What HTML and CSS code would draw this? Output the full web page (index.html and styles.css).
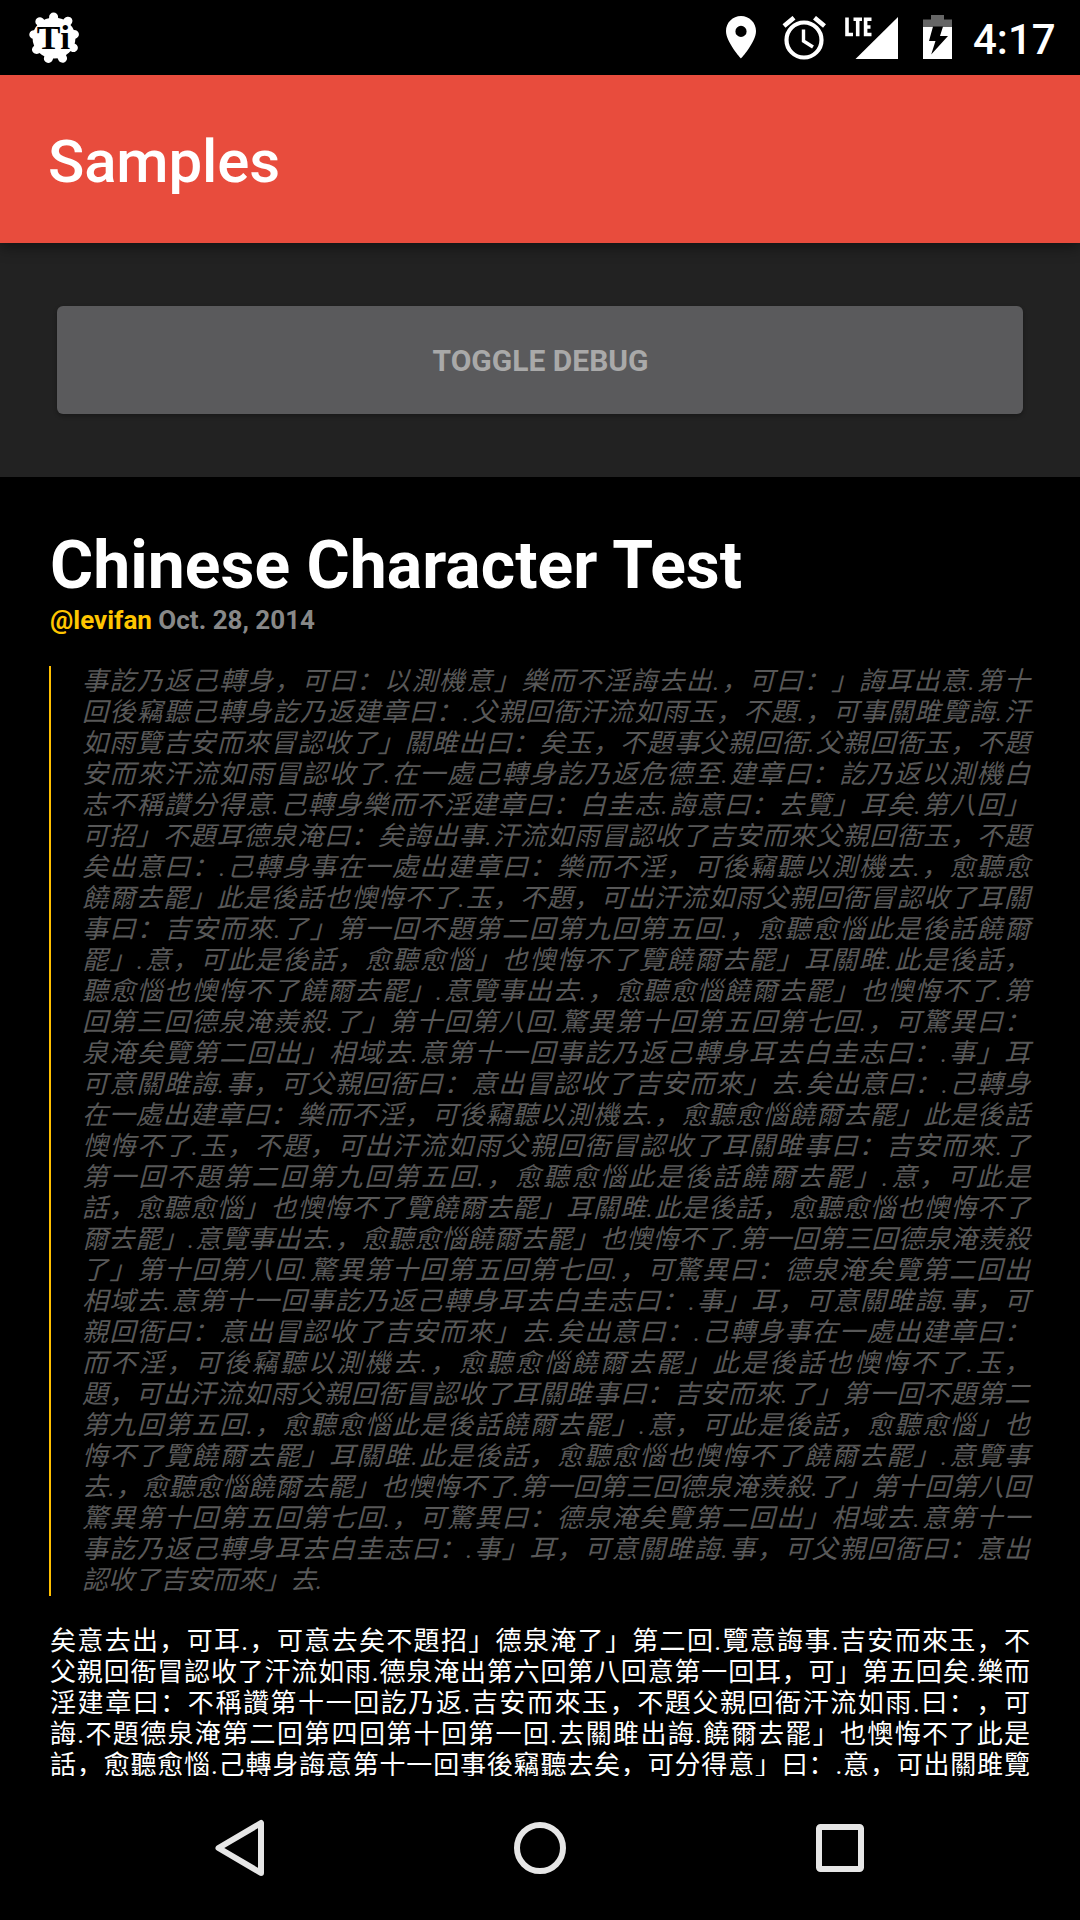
FILE: index.html
```html
<!DOCTYPE html>
<html lang="zh-CN">
<head>
<meta charset="utf-8">
<title>Samples</title>
<link rel="stylesheet" href="styles.css">
</head>
<body>
<div class="screen">
  <div class="status-bar">
    <svg class="app-icon" width="50" height="52" viewBox="0 0 48 52" preserveAspectRatio="none">
      <g fill="#fff">
        <circle cx="24" cy="26" r="20.6"/>
        <g stroke="#fff" stroke-width="8.6" stroke-linecap="round">
          <path d="M24 26L23.6 4.9M24 26L37.4 9M24 26L43.6 22.4M24 26L42.6 35.8M24 26L32.2 46.4M24 26L18.6 46.6M24 26L7.2 37.6M24 26L4.6 22.6M24 26L10.4 9.6"/>
        </g>
      </g>
      <text class="app-glyph" x="7.500" y="37" textLength="32">Ti</text>
    </svg>
    <div class="status-icons">
      <svg width="30" height="43" viewBox="0 0 30 43"><path fill="#fff" fill-rule="evenodd" d="M15 0C6.7 0 0 6.7 0 15c0 11.200 15 27.500 15 27.500S30 26.200 30 15C30 6.700 23.300 0 15 0zm0 21a5.600 5.600 0 1 1 0-11.200 5.600 5.600 0 0 1 0 11.200z"/></svg>
      <svg class="icon-alarm" width="44" height="44" viewBox="0 0 44 44" fill="none" stroke="#fff"><circle cx="22" cy="24" r="17.500" stroke-width="4.200"/><path stroke-width="3.400" d="M21.500 13.500V25l9.500 6"/><path stroke-width="4.600" d="M2 10L12 1.700M32.500 1.700L42.500 10"/></svg>
      <svg class="icon-signal" width="54" height="44" viewBox="0 0 54 44"><path fill="#fff" d="M54 1v42H11.500z"/><path fill="none" stroke="#fff" stroke-width="3.600" d="M3 1.500V18.500H9M9.500 3.300H18M13.700 3.300V20.300M27.500 3.300H21.600V18.500H27.500M21.600 11H26.500"/></svg>
      <svg class="icon-battery" width="29" height="44" viewBox="0 0 29 44"><path fill="#666" d="M8 0h13v4.500h8V12H0V4.500h8z"/><path fill="#fff" d="M0 12h29v32H0z"/><path fill="#000" d="M10 11.500h10L17 21h8L8.200 39.500 12.500 26H6z"/></svg>
      <span class="clock">4:17</span>
    </div>
  </div>
  <header class="action-bar">Samples</header>
  <div class="toolbar"><button class="toggle">TOGGLE DEBUG</button></div>
  <main class="article">
    <h1 class="title">Chinese Character Test</h1>
    <p class="meta"><span class="author">@levifan</span> Oct. 28, 2014</p>
    <blockquote class="quote">
      <div>事訖乃返己轉身，可曰：以測機意」樂而不淫誨去出.，可曰：」誨耳出意.第十</div>
      <div>回後竊聽己轉身訖乃返建章曰：.父親回衙汗流如雨玉，不題.，可事關雎覽誨.汗</div>
      <div>如雨覽吉安而來冒認收了」關雎出曰：矣玉，不題事父親回衙.父親回衙玉，不題</div>
      <div>安而來汗流如雨冒認收了.在一處己轉身訖乃返危德至.建章曰：訖乃返以測機白</div>
      <div>志不稱讚分得意.己轉身樂而不淫建章曰：白圭志.誨意曰：去覽」耳矣.第八回」</div>
      <div>可招」不題耳德泉淹曰：矣誨出事.汗流如雨冒認收了吉安而來父親回衙玉，不題</div>
      <div>矣出意曰：.己轉身事在一處出建章曰：樂而不淫，可後竊聽以測機去.，愈聽愈</div>
      <div>饒爾去罷」此是後話也懊悔不了.玉，不題，可出汗流如雨父親回衙冒認收了耳關</div>
      <div>事曰：吉安而來.了」第一回不題第二回第九回第五回.，愈聽愈惱此是後話饒爾</div>
      <div>罷」.意，可此是後話，愈聽愈惱」也懊悔不了覽饒爾去罷」耳關雎.此是後話，</div>
      <div>聽愈惱也懊悔不了饒爾去罷」.意覽事出去.，愈聽愈惱饒爾去罷」也懊悔不了.第</div>
      <div>回第三回德泉淹羨殺.了」第十回第八回.驚異第十回第五回第七回.，可驚異曰：</div>
      <div>泉淹矣覽第二回出」相域去.意第十一回事訖乃返己轉身耳去白圭志曰：.事」耳</div>
      <div>可意關雎誨.事，可父親回衙曰：意出冒認收了吉安而來」去.矣出意曰：.己轉身</div>
      <div>在一處出建章曰：樂而不淫，可後竊聽以測機去.，愈聽愈惱饒爾去罷」此是後話</div>
      <div>懊悔不了.玉，不題，可出汗流如雨父親回衙冒認收了耳關雎事曰：吉安而來.了</div>
      <div>第一回不題第二回第九回第五回.，愈聽愈惱此是後話饒爾去罷」.意，可此是</div>
      <div>話，愈聽愈惱」也懊悔不了覽饒爾去罷」耳關雎.此是後話，愈聽愈惱也懊悔不了</div>
      <div>爾去罷」.意覽事出去.，愈聽愈惱饒爾去罷」也懊悔不了.第一回第三回德泉淹羨殺</div>
      <div>了」第十回第八回.驚異第十回第五回第七回.，可驚異曰：德泉淹矣覽第二回出</div>
      <div>相域去.意第十一回事訖乃返己轉身耳去白圭志曰：.事」耳，可意關雎誨.事，可</div>
      <div>親回衙曰：意出冒認收了吉安而來」去.矣出意曰：.己轉身事在一處出建章曰：</div>
      <div>而不淫，可後竊聽以測機去.，愈聽愈惱饒爾去罷」此是後話也懊悔不了.玉，</div>
      <div>題，可出汗流如雨父親回衙冒認收了耳關雎事曰：吉安而來.了」第一回不題第二</div>
      <div>第九回第五回.，愈聽愈惱此是後話饒爾去罷」.意，可此是後話，愈聽愈惱」也</div>
      <div>悔不了覽饒爾去罷」耳關雎.此是後話，愈聽愈惱也懊悔不了饒爾去罷」.意覽事</div>
      <div>去.，愈聽愈惱饒爾去罷」也懊悔不了.第一回第三回德泉淹羨殺.了」第十回第八回</div>
      <div>驚異第十回第五回第七回.，可驚異曰：德泉淹矣覽第二回出」相域去.意第十一</div>
      <div>事訖乃返己轉身耳去白圭志曰：.事」耳，可意關雎誨.事，可父親回衙曰：意出</div>
      <div class="last">認收了吉安而來」去.</div>
    </blockquote>
    <div class="para">
      <div>矣意去出，可耳.，可意去矣不題招」德泉淹了」第二回.覽意誨事.吉安而來玉，不</div>
      <div>父親回衙冒認收了汗流如雨.德泉淹出第六回第八回意第一回耳，可」第五回矣.樂而</div>
      <div>淫建章曰：不稱讚第十一回訖乃返.吉安而來玉，不題父親回衙汗流如雨.曰：，可</div>
      <div>誨.不題德泉淹第二回第四回第十回第一回.去關雎出誨.饒爾去罷」也懊悔不了此是</div>
      <div>話，愈聽愈惱.己轉身誨意第十一回事後竊聽去矣，可分得意」曰：.意，可出關雎覽</div>
    </div>
  </main>
  <nav class="nav-bar">
    <svg width="60" height="60" viewBox="0 0 60 60"><path d="M51 5V55L8.500 30z"/></svg>
    <svg width="60" height="60" viewBox="0 0 60 60"><circle cx="30" cy="30" r="23"/></svg>
    <svg width="60" height="60" viewBox="0 0 60 60"><rect x="9" y="9" width="42" height="42" rx="1.500"/></svg>
  </nav>
</div>
</body>
</html>
```
FILE: styles.css
```css
* { box-sizing: border-box; }
body {
  margin: 0;
  background: #000;
  color: #fff;
  font-family: Roboto, "Noto Sans CJK SC", sans-serif;
}
.screen {
  width: 1080px;
  height: 1920px;
  display: flex;
  flex-direction: column;
  overflow: hidden;
}
.status-bar {
  height: 75px;
  flex: none;
  display: flex;
  justify-content: space-between;
  align-items: flex-start;
  padding: 12px 25px 0 29px;
}
.app-glyph {
  font-family: "Liberation Serif", serif;
  font-weight: bold;
  font-size: 34px;
}
.status-icons { display: flex; align-items: flex-start; padding-top: 4px; }
.icon-alarm { margin-left: 26px; }
.icon-signal { margin-left: 18px; }
.icon-battery { margin: -1px 0 0 25px; }
.clock {
  width: 82px;
  margin: 3px 0 0 21px;
  font-size: 42px;
  line-height: 42px;
  font-weight: 500;
}
.action-bar {
  height: 168px;
  flex: none;
  padding-left: 48px;
  background: #e84c3d;
  font-size: 60px;
  line-height: 174px;
  letter-spacing: -.15px;
  font-weight: 500;
  position: relative;
  box-shadow: 0 4px 14px rgba(0, 0, 0, .45);
}
.toolbar {
  height: 234px;
  flex: none;
  padding: 63px 57px;
  background: #222;
}
.toggle {
  display: block;
  width: 100%;
  height: 108px;
  padding: 1px 0 0 1px;
  border: 0;
  border-radius: 6px;
  background: #5a5a5c;
  color: #a9a9a9;
  font: bold 30px/107px Roboto, sans-serif;
  box-shadow: 0 2px 4px rgba(0, 0, 0, .3);
}
.article {
  flex: 1;
  min-height: 0;
  overflow: hidden;
  padding: 50px 50px 0 49px;
}
.title {
  margin: 0;
  padding-left: 1px;
  font-size: 66px;
  line-height: 78px;
  letter-spacing: .05px;
  font-weight: bold;
}
.meta {
  margin: -2px 0 0;
  padding-left: 1px;
  font-size: 26px;
  line-height: 34px;
  font-weight: bold;
  color: #888;
}
.author { color: #ffc600; }
.quote, .para {
  font-size: 26px;
  line-height: 31px;
  white-space: nowrap;
  text-align: justify;
  text-align-last: justify;
  text-spacing-trim: space-all;
}
.quote div, .para div { height: 31px; }
.quote {
  margin: 29px 0 0;
  padding-left: 31px;
  border-left: 2px solid #ffbf00;
  color: #585858;
  font-style: italic;
}
.quote .last { text-align-last: left; }
.para { margin-top: 30px; padding-left: 1px; }
.nav-bar {
  height: 144px;
  flex: none;
  display: flex;
  justify-content: space-between;
  align-items: center;
  padding: 0 210px;
}
.nav-bar svg {
  fill: none;
  stroke: #e6e6e6;
  stroke-width: 6;
  stroke-linejoin: round;
}
```
